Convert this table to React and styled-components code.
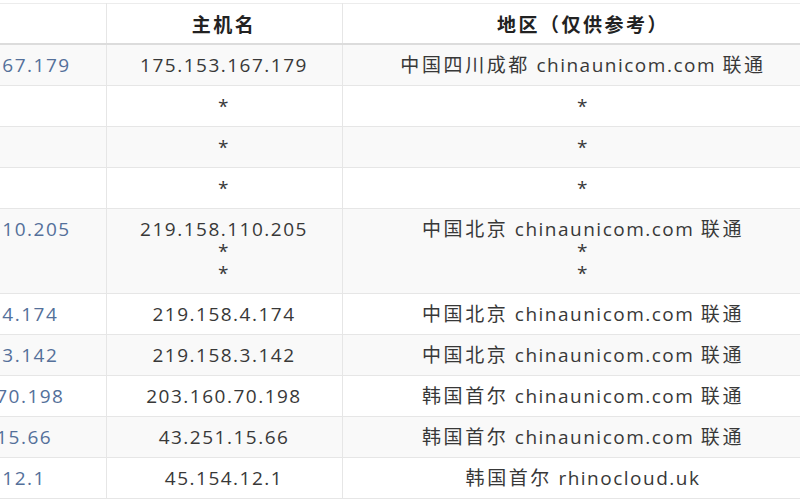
import React from 'react'
import styled, { createGlobalStyle } from 'styled-components'

const rows = [
    { ip: ['175.153.167.179'], host: ['175.153.167.179'], area: ['中国四川成都 chinaunicom.com 联通'] },
    { ip: ['*'], host: ['*'], area: ['*'] },
    { ip: ['*'], host: ['*'], area: ['*'] },
    { ip: ['*'], host: ['*'], area: ['*'] },
    { ip: ['219.158.110.205', '*', '*'], host: ['219.158.110.205', '*', '*'], area: ['中国北京 chinaunicom.com 联通', '*', '*'] },
    { ip: ['219.158.4.174'], host: ['219.158.4.174'], area: ['中国北京 chinaunicom.com 联通'] },
    { ip: ['219.158.3.142'], host: ['219.158.3.142'], area: ['中国北京 chinaunicom.com 联通'] },
    { ip: ['203.160.70.198'], host: ['203.160.70.198'], area: ['韩国首尔 chinaunicom.com 联通'] },
    { ip: ['43.251.15.66'], host: ['43.251.15.66'], area: ['韩国首尔 chinaunicom.com 联通'] },
    { ip: ['45.154.12.1'], host: ['45.154.12.1'], area: ['韩国首尔 rhinocloud.uk'] },
]

// chinese runs get a bit more spacing than latin ones
const Area = ({ text }) => (
    <Line>
        {text.split(/([\u4e00-\u9fff]+)/).filter(Boolean).map((part, i) =>
            /[\u4e00-\u9fff]/.test(part) ? <Han key={i}>{part}</Han> : <span key={i}>{part}</span>
        )}
    </Line>
)

export default function App() {
    return (
        <>
            <GlobalStyle />
            <Page>
                <Table>
                    <colgroup>
                        <col style={{ width: 238 }} />
                        <col style={{ width: 236 }} />
                        <col style={{ width: 482 }} />
                    </colgroup>
                    <thead>
                        <tr>
                            <Th>IP</Th>
                            <Th>主机名</Th>
                            <Th>地区（仅供参考）</Th>
                        </tr>
                    </thead>
                    <tbody>
                        {rows.map((r, i) => (
                            <Row key={i} $striped={i % 2 === 0}>
                                <Td>
                                    {r.ip.map((t, j) => t === '*' ? <Line key={j}>*</Line> : <IpLink key={j}>{t}</IpLink>)}
                                </Td>
                                <Td>{r.host.map((t, j) => <Line key={j}>{t}</Line>)}</Td>
                                <Td>{r.area.map((t, j) => <Area key={j} text={t} />)}</Td>
                            </Row>
                        ))}
                    </tbody>
                </Table>
            </Page>
        </>
    )
}

const GlobalStyle = createGlobalStyle`
    body {
        margin: 0;
        background: #fff;
        font-family: "Open Sans", "Noto Sans CJK SC", sans-serif;
        color: #333;
    }
`

const Page = styled.div`
    width: 800px;
    height: 500px;
    overflow: hidden;
    padding-top: 3px;
    box-sizing: border-box;
    background: #fff;
`

const Table = styled.table`
    margin-left: -132px;
    width: 956px;
    table-layout: fixed;
    border-collapse: collapse;
    border-top: 1px solid #ececec;
    font-size: 19px;
    letter-spacing: 1.5px;
`

const Th = styled.th`
    height: 39px;
    padding: 0 8px;
    font-weight: bold;
    color: #222;
    text-align: center;
    letter-spacing: 2.5px;
    border-right: 1px solid #e6e6e6;
    border-bottom: 2px solid #dcdcdc;
`

const Row = styled.tr`
    background: ${p => (p.$striped ? '#f9f9f9' : '#fff')};
`

const Td = styled.td`
    padding: 9px 8px;
    line-height: 22px;
    text-align: center;
    color: #383838;
    border-right: 1px solid #e6e6e6;
    border-bottom: 1px solid #e6e6e6;
    white-space: nowrap;
`

const Line = styled.div``

const Han = styled.span`
    letter-spacing: 2.6px;
`

const IpLink = styled.a`
    display: block;
    color: #54709a;
    text-decoration: none;
`
